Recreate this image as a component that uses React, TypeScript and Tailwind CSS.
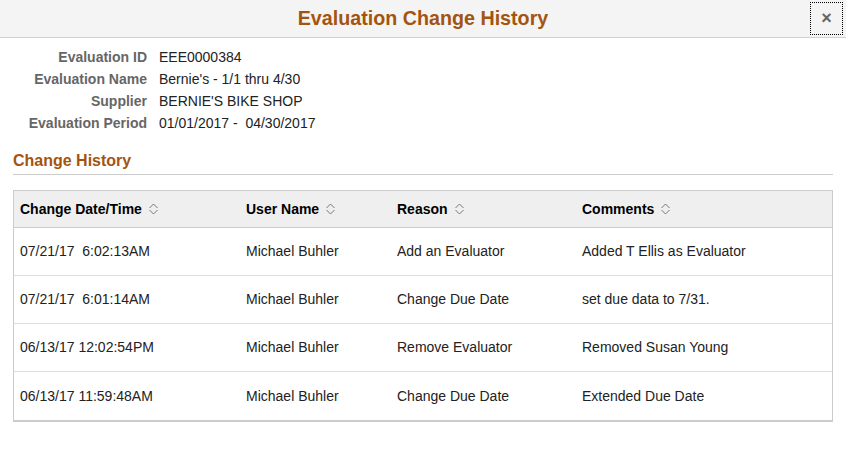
const details = [
  ["Evaluation ID", "EEE0000384"],
  ["Evaluation Name", "Bernie's - 1/1 thru 4/30"],
  ["Supplier", "BERNIE'S BIKE SHOP"],
  ["Evaluation Period", "01/01/2017 -  04/30/2017"],
];

const rows = [
  ["07/21/17  6:02:13AM", "Michael Buhler", "Add an Evaluator", "Added T Ellis as Evaluator"],
  ["07/21/17  6:01:14AM", "Michael Buhler", "Change Due Date", "set due data to 7/31."],
  ["06/13/17 12:02:54PM", "Michael Buhler", "Remove Evaluator", "Removed Susan Young"],
  ["06/13/17 11:59:48AM", "Michael Buhler", "Change Due Date", "Extended Due Date"],
];

const cols = ["Change Date/Time", "User Name", "Reason", "Comments"];
const widths = ["w-[226px]", "w-[151px]", "w-[185px]", "flex-1"];

function SortIcon() {
  return (
    <svg width="11" height="12" viewBox="0 0 11 12" className="ml-[6px] inline-block">
      <path d="M1.5 5 L5.5 1 L9.5 5" fill="none" stroke="#777" strokeWidth="1" />
      <path d="M1.5 7 L5.5 11 L9.5 7" fill="none" stroke="#777" strokeWidth="1" />
    </svg>
  );
}

export default function App() {
  return (
    <div className="h-[456px] w-[846px] bg-white font-['Liberation_Sans',Arial,sans-serif] text-[14px] text-[#222]">
      {/* dialog header */}
      <div className="relative flex h-[38px] items-center justify-center border-b border-[#d0d0d0] bg-[#f4f4f4]">
        <h1 className="text-[19.7px] font-bold text-[#a4540f]">Evaluation Change History</h1>
        <div className="absolute right-[3px] top-[2px] flex h-[33px] w-[33px] items-center justify-center border border-dotted border-black text-[18px] font-bold text-[#666]">
          ×
        </div>
      </div>

      {/* evaluation details */}
      <div className="mt-[8px] flex flex-col">
        {details.map(([label, value]) => (
          <div key={label} className="flex h-[22px] items-center">
            <div className="w-[147px] text-right font-bold text-[#666]">{label}</div>
            <div className="ml-[12px] whitespace-pre text-[#222]">{value}</div>
          </div>
        ))}
      </div>

      <div className="mx-[13px] mt-[15px] border-b border-[#ccc] pb-[1px]">
        <h2 className="text-[16px] font-bold text-[#a4540f]">Change History</h2>
      </div>

      {/* grid */}
      <div className="mx-[13px] mt-[15px] border border-b-2 border-[#ccc]">
        <div className="flex h-[37px] items-center border-b border-[#ccc] bg-[#efefef] font-bold text-black">
          {cols.map((c, i) => (
            <div key={c} className={`${widths[i]} flex items-center pl-[6px]`}>
              {c}
              <SortIcon />
            </div>
          ))}
        </div>
        {rows.map((r, ri) => (
          <div
            key={ri}
            className={`flex h-[48px] items-center ${ri < rows.length - 1 ? "border-b border-[#ddd]" : ""}`}
          >
            {r.map((cell, i) => (
              <div key={i} className={`${widths[i]} whitespace-pre pl-[6px]`}>
                {cell}
              </div>
            ))}
          </div>
        ))}
      </div>
    </div>
  );
}
